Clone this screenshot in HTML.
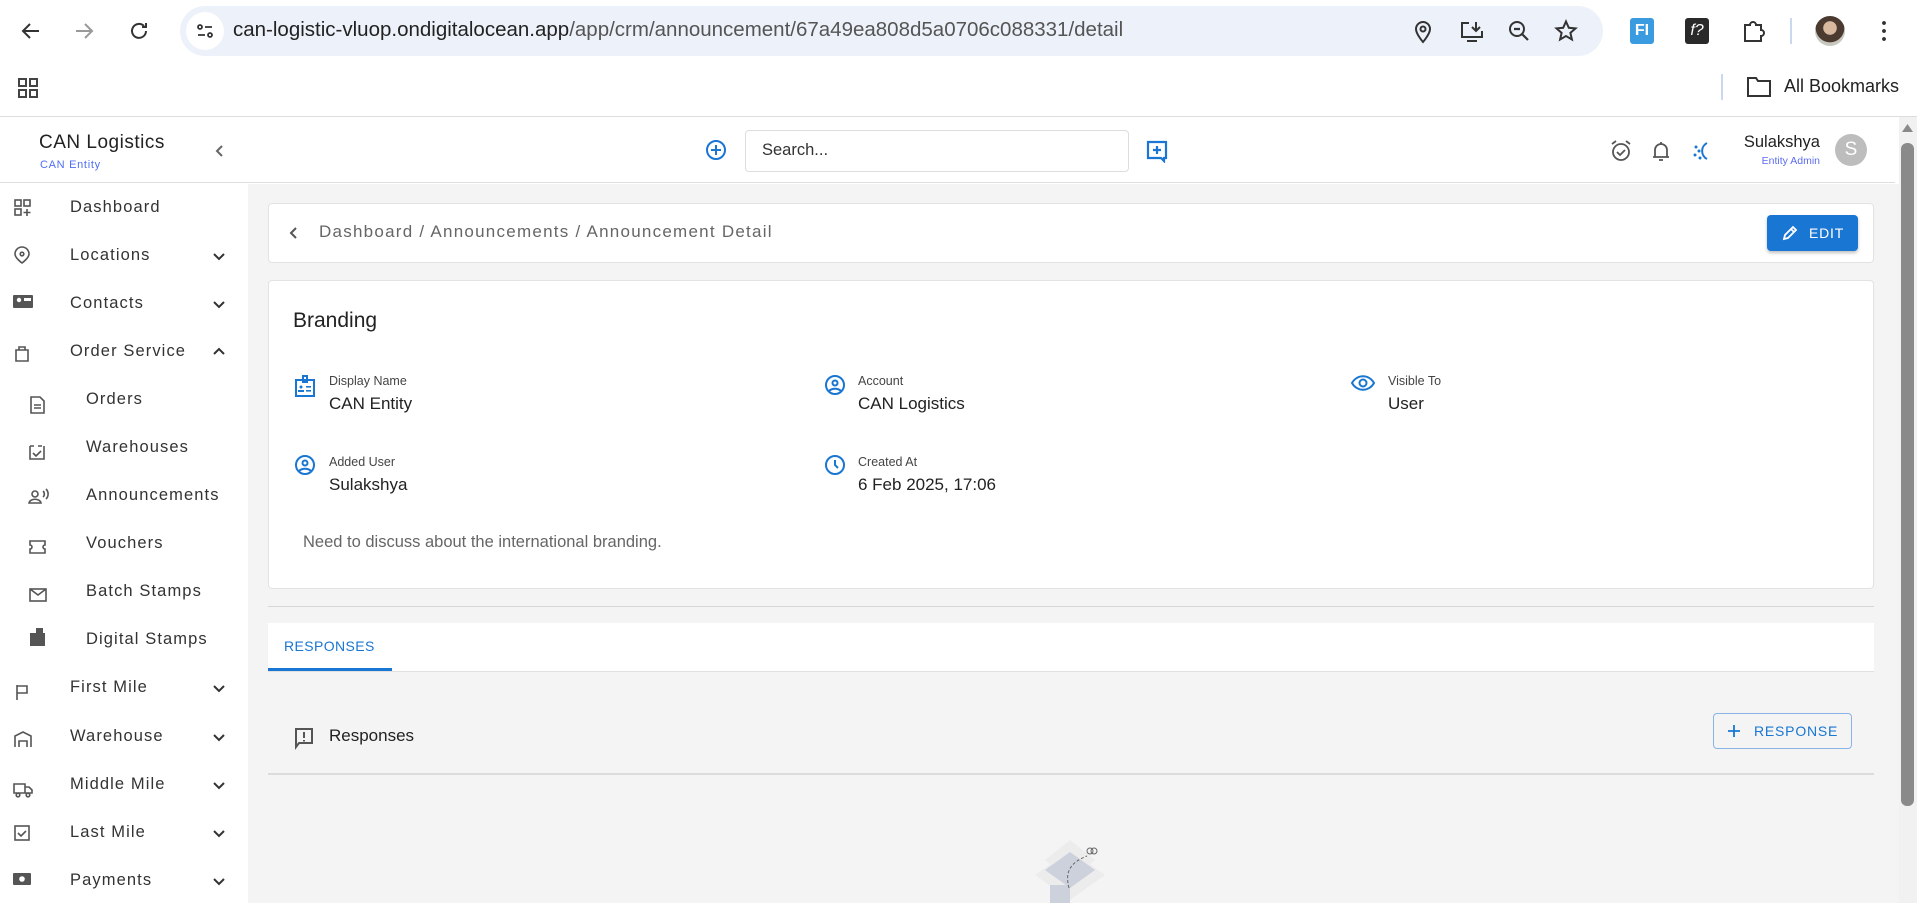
<!DOCTYPE html>
<html><head><meta charset="utf-8"><style>
*{box-sizing:border-box;margin:0;padding:0}
body{width:1917px;height:903px;overflow:hidden;background:#fff;font-family:"Liberation Sans",sans-serif;position:relative;color:#222}
.a{position:absolute}
.side{font-size:16.5px;color:#333;letter-spacing:1.1px}
.lbl{font-size:12.5px;color:#444}
.val{font-size:17px;color:#222}
</style></head><body>
<!-- browser chrome -->
<div class="a" style="left:0;top:0;width:1917px;height:117px;background:#fff;border-bottom:1px solid #ddd"></div>
<svg class="a" style="left:19px;top:19px" width="24" height="24" viewBox="0 0 24 24"><path d="M20 12H5M11 5l-7 7 7 7" stroke="#333" stroke-width="2" fill="none"/></svg>
<svg class="a" style="left:72px;top:19px" width="24" height="24" viewBox="0 0 24 24"><path d="M4 12h15M13 5l7 7-7 7" stroke="#999" stroke-width="2" fill="none"/></svg>
<svg class="a" style="left:127px;top:19px" width="24" height="24" viewBox="0 0 24 24"><path d="M19 12a7 7 0 1 1-2-5M19 4v4h-4" stroke="#333" stroke-width="2" fill="none"/></svg>
<div class="a" style="left:180px;top:6px;width:1423px;height:50px;border-radius:25px;background:#edf1f9"></div>
<div class="a" style="left:186px;top:12px;width:38px;height:38px;border-radius:19px;background:#fff"></div>
<svg class="a" style="left:195px;top:21px" width="20" height="20" viewBox="0 0 20 20"><g stroke="#333" stroke-width="1.8" fill="none"><circle cx="5" cy="6" r="2"/><path d="M10 6h7M3 14h7"/><circle cx="15" cy="14" r="2"/></g></svg>
<div class="a" style="left:233px;top:18px;font-size:20.5px;color:#222">can-logistic-vluop.ondigitalocean.app<span style="color:#555">/app/crm/announcement/67a49ea808d5a0706c088331/detail</span></div>
<svg class="a" style="left:1411px;top:19px" width="24" height="26" viewBox="0 0 24 26"><path d="M12 23s-7-8-7-13a7 7 0 0 1 14 0c0 5-7 13-7 13z" stroke="#333" stroke-width="2" fill="none"/><circle cx="12" cy="10" r="2.5" stroke="#333" stroke-width="2" fill="none"/></svg>
<svg class="a" style="left:1459px;top:19px" width="26" height="26" viewBox="0 0 26 26"><path d="M10 4H3v14h20v-6M8 22h10M17 3v9M13 8l4 4 4-4" stroke="#333" stroke-width="2" fill="none"/></svg>
<svg class="a" style="left:1507px;top:19px" width="24" height="24" viewBox="0 0 24 24"><circle cx="10" cy="10" r="7" stroke="#333" stroke-width="2" fill="none"/><path d="M7 10h6M15 15l6 6" stroke="#333" stroke-width="2.2"/></svg>
<svg class="a" style="left:1554px;top:19px" width="24" height="24" viewBox="0 0 24 24"><path d="M12 2.5l2.8 6.3 6.7.6-5.1 4.5 1.5 6.6L12 17l-5.9 3.5 1.5-6.6-5.1-4.5 6.7-.6z" stroke="#333" stroke-width="2" fill="none"/></svg>
<div class="a" style="left:1630px;top:18px;width:24px;height:26px;background:#3b9be0;border-radius:3px;color:#fff;font-weight:bold;font-size:16px;text-align:center;line-height:26px">FI</div>
<div class="a" style="left:1685px;top:18px;width:24px;height:26px;background:#2a2a2a;border-radius:3px;color:#fff;font-style:italic;font-size:16px;text-align:center;line-height:26px">f?</div>
<svg class="a" style="left:1740px;top:18px" width="26" height="26" viewBox="0 0 26 26"><path d="M5 7h5a3 3 0 0 1 6 0h5v5a3 3 0 0 1 0 6v5H5z" stroke="#333" stroke-width="2" fill="none"/></svg>
<div class="a" style="left:1790px;top:18px;width:2px;height:26px;background:#c9d7f0"></div>
<div class="a" style="left:1815px;top:16px;width:30px;height:30px;border-radius:15px;background:radial-gradient(circle at 50% 40%,#d9b8a0 0 28%,#4a3a30 30% 60%,#c8c8c0 62%)"></div>
<div class="a" style="left:1882px;top:19px;width:4px;height:24px;background:radial-gradient(circle,#333 1.8px,transparent 2px) 0 0/4px 8px"></div>
<svg class="a" style="left:17px;top:77px" width="22" height="22" viewBox="0 0 22 22"><g stroke="#444" stroke-width="2" fill="none"><rect x="2" y="2" width="7" height="7"/><rect x="13" y="2" width="7" height="7"/><rect x="2" y="13" width="7" height="7"/><rect x="13" y="13" width="7" height="7"/></g></svg>
<div class="a" style="left:1721px;top:74px;width:2px;height:26px;background:#c9d7f0"></div>
<svg class="a" style="left:1746px;top:75px" width="26" height="24" viewBox="0 0 26 24"><path d="M2 3h8l2 3h12v15H2z" stroke="#333" stroke-width="2" fill="none"/></svg>
<div class="a" style="left:1784px;top:76px;font-size:18px;color:#222">All Bookmarks</div>

<!-- app header -->
<div class="a" style="left:0;top:117px;width:1895px;height:66px;border-bottom:1px solid #ddd;background:#fff"></div>
<div class="a" style="left:39px;top:132px;font-size:19px;color:#222;letter-spacing:.5px">CAN Logistics</div>
<div class="a" style="left:40px;top:159px;font-size:11px;color:#4f6df5;letter-spacing:.7px">CAN Entity</div>
<svg class="a" style="left:213px;top:143px" width="14" height="16" viewBox="0 0 14 16"><path d="M9 3L4 8l5 5" stroke="#666" stroke-width="2" fill="none"/></svg>
<svg class="a" style="left:705px;top:139px" width="22" height="22" viewBox="0 0 22 22"><circle cx="11" cy="11" r="9" stroke="#1976d2" stroke-width="2" fill="none"/><path d="M11 6v10M6 11h10" stroke="#1976d2" stroke-width="2"/></svg>
<div class="a" style="left:745px;top:130px;width:384px;height:42px;border:1px solid #ddd;border-radius:4px;background:#fff"></div>
<div class="a" style="left:762px;top:141px;font-size:16.5px;color:#333">Search...</div>
<svg class="a" style="left:1145px;top:139px" width="24" height="24" viewBox="0 0 24 24"><path d="M3 3h18v16h-2v3l-3-3H3z" stroke="#1976d2" stroke-width="2.2" fill="none"/><path d="M12 7v8M8 11h8" stroke="#1976d2" stroke-width="2.2"/></svg>
<svg class="a" style="left:1610px;top:139px" width="22" height="24" viewBox="0 0 22 24"><circle cx="11" cy="13" r="8" stroke="#555" stroke-width="1.8" fill="none"/><path d="M7 13l3 3 5-5M2 5l4-3M20 5l-4-3" stroke="#555" stroke-width="1.8" fill="none"/></svg>
<svg class="a" style="left:1651px;top:139px" width="20" height="24" viewBox="0 0 20 24"><path d="M4 18V11a6 6 0 0 1 12 0v7zM2 18h16M8 21h4M10 3v2" stroke="#555" stroke-width="1.8" fill="none"/></svg>
<svg class="a" style="left:1690px;top:139px" width="22" height="24" viewBox="0 0 22 24"><path d="M17 4a9 9 0 0 0 0 16" stroke="#1976d2" stroke-width="2" fill="none"/><g fill="#1976d2"><circle cx="6" cy="8" r="1.5"/><circle cx="9" cy="12" r="1.5"/><circle cx="5" cy="16" r="1.5"/><circle cx="10" cy="19" r="1.5"/></g></svg>
<div class="a" style="left:1738px;top:133px;width:82px;text-align:right;font-size:16.5px;color:#222">Sulakshya</div>
<div class="a" style="left:1738px;top:155px;width:82px;text-align:right;font-size:10.5px;color:#5b6cf0">Entity Admin</div>
<div class="a" style="left:1835px;top:134px;width:32px;height:32px;border-radius:16px;background:#bdbdbd;color:#fff;font-size:19px;text-align:center;line-height:32px">S</div>

<!-- sidebar -->
<div class="a" style="left:0;top:184px;width:248px;height:719px;background:#fff"></div>
<div class="a" style="left:248px;top:184px;width:1651px;height:719px;background:#f4f4f4"></div>
<div class="side">
<div class="a" style="left:70px;top:198px">Dashboard</div>
<div class="a" style="left:70px;top:246px">Locations</div>
<div class="a" style="left:70px;top:294px">Contacts</div>
<div class="a" style="left:70px;top:342px">Order Service</div>
<div class="a" style="left:86px;top:390px">Orders</div>
<div class="a" style="left:86px;top:438px">Warehouses</div>
<div class="a" style="left:86px;top:486px">Announcements</div>
<div class="a" style="left:86px;top:534px">Vouchers</div>
<div class="a" style="left:86px;top:582px">Batch Stamps</div>
<div class="a" style="left:86px;top:630px">Digital Stamps</div>
<div class="a" style="left:70px;top:678px">First Mile</div>
<div class="a" style="left:70px;top:727px">Warehouse</div>
<div class="a" style="left:70px;top:775px">Middle Mile</div>
<div class="a" style="left:70px;top:823px">Last Mile</div>
<div class="a" style="left:70px;top:871px">Payments</div>
</div>
<svg class="a" style="left:0;top:184px" width="248" height="719" viewBox="0 184 248 719">
<g stroke="#333" stroke-width="2" fill="none">
<path d="M214 254l5 5 5-5M214 302l5 5 5-5M214 354l5-5 5 5M214 686l5 5 5-5M214 735l5 5 5-5M214 783l5 5 5-5M214 831l5 5 5-5M214 879l5 5 5-5"/>
</g>
<g stroke="#555" stroke-width="1.6" fill="none">
<rect x="15" y="200" width="6" height="6"/><rect x="24" y="200" width="6" height="6"/><rect x="15" y="209" width="6" height="6"/><path d="M27 209v7M23.5 212.5h7"/>
<path d="M22 263s-7-5-7-9a7 7 0 0 1 14 0c0 4-7 9-7 9z"/><circle cx="22" cy="254" r="1.8"/>
<path d="M16 350h12v11H16zM19 350v-3h6v3"/>
<path d="M31 397h9l4 4v12H31zM34 405h7M34 408h7"/>
<path d="M30 446h4M38 446h4M30 446v13h14v-13M33 453l3 3 5-5"/>
<circle cx="35" cy="494" r="3"/><path d="M29 503c1-5 11-5 12 0zM43 491a4 4 0 0 1 0 6M46 489a7 7 0 0 1 0 10"/>
<path d="M30 541h15v4a2 2 0 0 0 0 4v4H30v-4a2 2 0 0 0 0-4z"/>
<rect x="30" y="589" width="16" height="12"/><path d="M30 589l8 6 8-6"/>
<path d="M17 685v15M17 686h10v7H17"/>
<path d="M15 747v-11l8-4 8 4v11M19 747v-6h8v6"/>
<path d="M14 784h11v9H14zM25 787h4l3 3v3h-7"/><circle cx="18" cy="795" r="1.8"/><circle cx="28" cy="795" r="1.8"/>
<rect x="15" y="826" width="14" height="14"/><path d="M18 833l3 3 5-5"/>
</g>
<g fill="#555">
<rect x="13" y="295" width="20" height="13" rx="1"/><rect x="30" y="633" width="15" height="13"/><rect x="36" y="628" width="7" height="6"/>
<rect x="13" y="873" width="18" height="12" rx="1"/>
</g>
<g fill="#fff"><circle cx="19" cy="300" r="2.2"/><rect x="24" y="298" width="7" height="3"/><circle cx="22" cy="879" r="2.8"/></g>
</svg>

<!-- breadcrumb card -->
<div class="a" style="left:268px;top:203px;width:1606px;height:60px;background:#fff;border:1px solid #e2e2e2;border-radius:4px"></div>
<svg class="a" style="left:287px;top:225px" width="14" height="16" viewBox="0 0 14 16"><path d="M9 3L4 8l5 5" stroke="#555" stroke-width="2" fill="none"/></svg>
<div class="a" style="left:319px;top:222px;font-size:17px;color:#666;letter-spacing:1.25px">Dashboard / Announcements / Announcement Detail</div>
<div class="a" style="left:1767px;top:215px;width:91px;height:36px;background:#1976d2;border-radius:4px;box-shadow:0 2px 3px rgba(0,0,0,.25);color:#fff;font-size:14px;letter-spacing:.8px;line-height:36px;padding-left:42px">EDIT</div>
<svg class="a" style="left:1781px;top:224px" width="18" height="18" viewBox="0 0 18 18"><path d="M3 15l1-4 8-8 3 3-8 8zM10 5l3 3" stroke="#fff" stroke-width="1.8" fill="none"/></svg>

<!-- branding card -->
<div class="a" style="left:268px;top:280px;width:1606px;height:309px;background:#fff;border:1px solid #e2e2e2;border-radius:4px"></div>
<div class="a" style="left:293px;top:309px;font-size:21px;color:#222">Branding</div>
<svg class="a" style="left:294px;top:374px" width="22" height="24" viewBox="0 0 22 24"><g stroke="#1976d2" stroke-width="2" fill="none"><rect x="2" y="6" width="18" height="16"/><path d="M9 2h4v6H9z"/></g><g fill="#1976d2"><circle cx="7" cy="13" r="1.5"/><rect x="4" y="16" width="6" height="2"/><rect x="12" y="12" width="5" height="1.6"/><rect x="12" y="16" width="5" height="1.6"/></g></svg>
<div class="a lbl" style="left:329px;top:374px">Display Name</div>
<div class="a val" style="left:329px;top:394px">CAN Entity</div>
<svg class="a" style="left:824px;top:374px" width="22" height="22" viewBox="0 0 22 22"><circle cx="11" cy="11" r="9" stroke="#1976d2" stroke-width="2" fill="none"/><circle cx="11" cy="9" r="2.5" stroke="#1976d2" stroke-width="2" fill="none"/><path d="M5 17c3-3 9-3 12 0" stroke="#1976d2" stroke-width="2" fill="none"/></svg>
<div class="a lbl" style="left:858px;top:374px">Account</div>
<div class="a val" style="left:858px;top:394px">CAN Logistics</div>
<svg class="a" style="left:1351px;top:374px" width="24" height="18" viewBox="0 0 24 18"><path d="M1 9c5-9 17-9 22 0-5 9-17 9-22 0z" stroke="#1976d2" stroke-width="2" fill="none"/><circle cx="12" cy="9" r="3.5" stroke="#1976d2" stroke-width="2" fill="none"/></svg>
<div class="a lbl" style="left:1388px;top:374px">Visible To</div>
<div class="a val" style="left:1388px;top:394px">User</div>
<svg class="a" style="left:294px;top:454px" width="22" height="22" viewBox="0 0 22 22"><circle cx="11" cy="11" r="9" stroke="#1976d2" stroke-width="2" fill="none"/><circle cx="11" cy="9" r="2.5" stroke="#1976d2" stroke-width="2" fill="none"/><path d="M5 17c3-3 9-3 12 0" stroke="#1976d2" stroke-width="2" fill="none"/></svg>
<div class="a lbl" style="left:329px;top:455px">Added User</div>
<div class="a val" style="left:329px;top:475px">Sulakshya</div>
<svg class="a" style="left:824px;top:454px" width="22" height="22" viewBox="0 0 22 22"><circle cx="11" cy="11" r="9" stroke="#1976d2" stroke-width="2" fill="none"/><path d="M11 6v5l3 3" stroke="#1976d2" stroke-width="2" fill="none"/></svg>
<div class="a lbl" style="left:858px;top:455px">Created At</div>
<div class="a val" style="left:858px;top:475px">6 Feb 2025, 17:06</div>
<div class="a" style="left:303px;top:533px;font-size:16.5px;color:#666">Need to discuss about the international branding.</div>

<div class="a" style="left:268px;top:606px;width:1606px;height:1px;background:#d6d6d6"></div>
<!-- tabs -->
<div class="a" style="left:268px;top:623px;width:1606px;height:49px;background:#fff;border-bottom:1px solid #e0e0e0"></div>
<div class="a" style="left:284px;top:638px;font-size:14px;color:#1976d2;letter-spacing:.4px">RESPONSES</div>
<div class="a" style="left:268px;top:668px;width:124px;height:3px;background:#1976d2"></div>

<svg class="a" style="left:293px;top:726px" width="22" height="24" viewBox="0 0 22 24"><path d="M3 3h16v14H6l-3 4z" stroke="#555" stroke-width="2" fill="none"/><path d="M11 6v6M11 14v1.5" stroke="#555" stroke-width="2"/></svg>
<div class="a" style="left:329px;top:726px;font-size:17px;color:#222">Responses</div>
<div class="a" style="left:1713px;top:713px;width:139px;height:36px;border:1px solid #8ab4e6;border-radius:4px;color:#1976d2;font-size:14px;letter-spacing:.8px;line-height:34px;padding-left:40px">RESPONSE</div>
<svg class="a" style="left:1725px;top:722px" width="18" height="18" viewBox="0 0 18 18"><path d="M9 3v12M3 9h12" stroke="#1976d2" stroke-width="1.8"/></svg>
<div class="a" style="left:268px;top:773px;width:1606px;height:2px;background:#dcdcdc"></div>

<!-- illustration -->
<svg class="a" style="left:1005px;top:830px" width="130" height="73" viewBox="0 0 130 73"><path d="M40 30l25-20 25 20-25 20z" fill="#ececec"/><path d="M30 45l35-25 35 25-35 25z" fill="#ececec"/><path d="M40 40l25-18 25 18-25 18z" fill="#ccd1dc"/><rect x="45" y="55" width="20" height="18" fill="#ccd1dc"/><path d="M64 58c-4-15 0-25 18-32" stroke="#666" stroke-width="1" stroke-dasharray="3 2" fill="none"/><circle cx="85" cy="21" r="3" stroke="#666" fill="none"/><circle cx="89" cy="21" r="3" stroke="#666" fill="none"/></svg>

<!-- scrollbar -->
<div class="a" style="left:1899px;top:117px;width:18px;height:786px;background:#f1f1f1"></div>
<div class="a" style="left:1901px;top:143px;width:13px;height:663px;background:#8a8a8a;border-radius:6px"></div>
<svg class="a" style="left:1901px;top:122px" width="13" height="12" viewBox="0 0 13 12"><path d="M6.5 2L12 10H1z" fill="#8a8a8a"/></svg>
</body></html>
